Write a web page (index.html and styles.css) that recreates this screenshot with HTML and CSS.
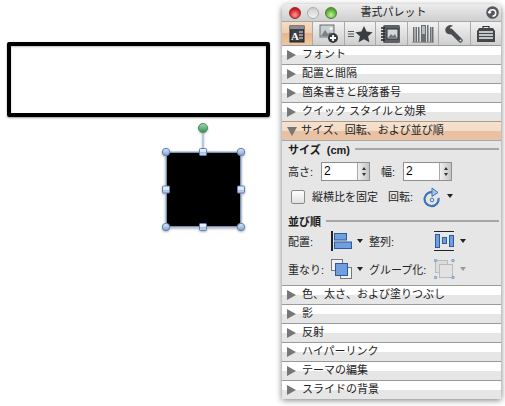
FILE: index.html
```html
<!DOCTYPE html>
<html lang="ja">
<head>
<meta charset="utf-8">
<title>書式パレット</title>
<link rel="stylesheet" href="styles.css">
</head>
<body>
<main class="canvas">
  <div class="box-shape"></div>
  <svg class="selection" width="100" height="120" viewBox="0 0 100 120">
    <defs>
      <linearGradient id="hb" x1="0" y1="0" x2="0" y2="1"><stop offset="0" stop-color="#dfe8f6"/><stop offset="1" stop-color="#7f9fd0"/></linearGradient>
      <linearGradient id="hs" x1="0" y1="0" x2="0" y2="1"><stop offset="0" stop-color="#eef3fb"/><stop offset=".5" stop-color="#dbe5f4"/><stop offset=".55" stop-color="#a9c0e4"/><stop offset="1" stop-color="#c5d5ee"/></linearGradient>
      <linearGradient id="hg" x1="0" y1="0" x2="0" y2="1"><stop offset="0" stop-color="#a5d8ae"/><stop offset="1" stop-color="#2f8f55"/></linearGradient>
    </defs>
    <line x1="47" y1="13" x2="47" y2="37" stroke="#a9c0e4" stroke-width="1.5"/>
    <rect x="10" y="37" width="75" height="75" fill="#000" stroke="#a9c0e4" stroke-width="1.5"/>
    <circle cx="47" cy="13" r="4.5" fill="url(#hg)" stroke="#4a8a68"/>
    <g fill="url(#hb)" stroke="#5f7fb5">
      <circle cx="10" cy="37" r="3.7"/><circle cx="85" cy="37" r="3.7"/>
      <circle cx="10" cy="112" r="3.7"/><circle cx="85" cy="112" r="3.7"/>
    </g>
    <g fill="url(#hs)" stroke="#5f7fb5">
      <rect x="43.5" y="33.5" width="7" height="7" rx="1"/><rect x="43.5" y="108.5" width="7" height="7" rx="1"/>
      <rect x="6.5" y="71" width="7" height="7" rx="1"/><rect x="81.5" y="71" width="7" height="7" rx="1"/>
    </g>
  </svg>
</main>

<aside class="palette">
  <header class="titlebar">
    <div class="lights"><span class="light red"></span><span class="light off"></span><span class="light green"></span></div>
    <h1 class="title">書式パレット</h1>
    <svg class="help" width="13" height="13" viewBox="0 0 12 12"><circle cx="6" cy="6" r="5.8" fill="#55585c"/><path d="M3 6.500a3 3 0 1 1 3 3M3 6.500l-.8-1.600M3 6.500l1.700-.8" fill="none" stroke="#fff" stroke-width="1.400"/></svg>
  </header>

  <nav class="toolbar">
    <div class="tool active">
      <svg width="20" height="20" viewBox="0 0 20 20"><rect x="3" y="2" width="14" height="16" fill="#3c4046" stroke="#1e1e1e"/><rect x="3" y="2" width="14" height="3" fill="#8a8e92"/><text x="4" y="15.500" class="tool-a">A</text><path d="M12 8h4M12 11h4M12 14h4" stroke="#e8e8e8" stroke-width="1.200"/></svg>
    </div>
    <div class="tool">
      <svg width="22" height="20" viewBox="0 0 22 20"><rect x="2" y="1" width="14" height="12" fill="#c9ced3" stroke="#6a6e73"/><path d="M3 12l4-6 3 4 2-2 3 4z" fill="#7c8187"/><circle cx="13" cy="4.500" r="1.500" fill="#f4f4f4"/><circle cx="15" cy="14" r="5" fill="#3a3d42"/><path d="M15 11v6M12 14h6" stroke="#fff" stroke-width="1.800"/></svg>
    </div>
    <div class="tool">
      <svg width="26" height="20" viewBox="0 0 26 20"><path d="M1 7.500h6M1 10h6M1 12.500h6" stroke="#555" stroke-width="1"/><path d="M17 2l2.600 5.600 6 .7-4.500 4 1.300 6L17 15.300 11.600 18.300l1.300-6-4.500-4 6-.7z" fill="#3a3d42"/></svg>
    </div>
    <div class="tool">
      <svg width="22" height="20" viewBox="0 0 22 20"><rect x="3" y="1" width="17" height="18" rx="1.500" fill="#5d6166"/><rect x="7" y="5" width="11" height="10" fill="#d5d8dc" stroke="#2e3034"/><path d="M8 14l3-4 2 2 2-2 2 4z" fill="#777"/><path d="M1 4h4M1 7h4M1 10h4M1 13h4M1 16h4" stroke="#222" stroke-width="1.300"/></svg>
    </div>
    <div class="tool">
      <svg width="22" height="20" viewBox="0 0 22 20">
        <g fill="#6a6e73"><rect x="1" y="3" width="1.500" height="15"/><rect x="3.500" y="3" width="1.500" height="15"/><rect x="6" y="3" width="1.500" height="15"/><rect x="9" y="1" width="5" height="17"/><rect x="15" y="1" width="1.500" height="17"/><rect x="18" y="3" width="1.500" height="15"/><rect x="20" y="3" width="1.500" height="15"/></g>
        <g fill="#b6bbc0"><rect x="10" y="2" width="3" height="8"/></g>
        <rect x="0" y="18" width="22" height="1" fill="#9a9a9a"/>
      </svg>
    </div>
    <div class="tool">
      <svg width="20" height="20" viewBox="0 0 20 20"><path d="M7 7l9.500 9.500" stroke="#4a4e53" stroke-width="4.500" stroke-linecap="round"/><path d="M9 1.800A5 5 0 0 0 2 8.500a5 5 0 0 0 6.800 1L9.500 6.500 6.500 5.500 6 3.500z" fill="#4a4e53"/><circle cx="16.500" cy="16.500" r="1" fill="#e6e6e6"/></svg>
    </div>
    <div class="tool">
      <svg width="20" height="20" viewBox="0 0 20 20"><path d="M7 4V2.500h6V4" fill="none" stroke="#333" stroke-width="1.200"/><path d="M1 7l2-3h14l2 3v11H1z" fill="#44484d"/><path d="M3 8h14M3 11h14M3 14h14" stroke="#eee" stroke-width="1.300"/></svg>
    </div>
  </nav>

  <div class="section"><span class="arrow"></span><span class="name">フォント</span></div>
  <div class="section"><span class="arrow"></span><span class="name">配置と間隔</span></div>
  <div class="section"><span class="arrow"></span><span class="name">箇条書きと段落番号</span></div>
  <div class="section"><span class="arrow"></span><span class="name">クイック スタイルと効果</span></div>
  <div class="section open"><span class="arrow down"></span><span class="name">サイズ、回転、および並び順</span></div>

  <div class="panel">
    <div class="group-head"><strong>サイズ (cm)</strong><span class="rule"></span></div>
    <div class="row size-row">
      <label class="lab lab-h">高さ:</label>
      <div class="spin"><span class="value">2</span><span class="stepper"><i class="up"></i><i class="dn"></i></span></div>
      <label class="lab lab-w">幅:</label>
      <div class="spin"><span class="value">2</span><span class="stepper"><i class="up"></i><i class="dn"></i></span></div>
    </div>
    <div class="row lock-row">
      <span class="check"></span>
      <span class="lab lab-lock">縦横比を固定</span>
      <span class="lab lab-rot">回転:</span>
      <svg class="rot" width="18" height="21" viewBox="0 0 18 21"><path d="M11 5.500A7 7 0 1 0 15.500 11" fill="none" stroke="#3f73b8" stroke-width="2.200"/><path d="M9 1l6 4.500-6 4z" fill="#a9c4e8" stroke="#3f73b8"/><circle cx="9" cy="13" r="1.800" fill="none" stroke="#3f73b8"/></svg>
      <span class="drop"></span>
    </div>

    <div class="group-head second"><strong>並び順</strong><span class="rule"></span></div>
    <div class="row arrange">
      <span class="lab lab-a">配置:</span>
      <svg class="ic" width="21" height="20" viewBox="0 0 21 20"><rect width="2" height="20" fill="#222"/><rect x="3.500" y="2.500" width="12" height="6.500" fill="#6f9fdc" stroke="#2c5a9e"/><rect x="3.500" y="11" width="17" height="6.500" fill="#6f9fdc" stroke="#2c5a9e"/></svg>
      <span class="drop"></span>
      <span class="lab lab-b">整列:</span>
      <svg class="ic" width="21" height="20" viewBox="0 0 21 20"><path d="M0 .5h20M0 19.500h20" stroke="#222"/><rect x="1.500" y="3.500" width="4" height="13" fill="#6f9fdc" stroke="#2c5a9e"/><rect x="8.500" y="6.500" width="4" height="6" fill="#6f9fdc" stroke="#2c5a9e"/><rect x="15.500" y="4.500" width="4" height="11" fill="#6f9fdc" stroke="#2c5a9e"/></svg>
      <span class="drop"></span>
    </div>
    <div class="row arrange arrange-2">
      <span class="lab lab-a">重なり:</span>
      <svg class="ic" width="21" height="20" viewBox="0 0 21 20"><rect x=".5" y=".5" width="11" height="11" fill="#f2f2f2" stroke="#777"/><rect x="9.500" y="8.500" width="11" height="11" fill="#f2f2f2" stroke="#777"/><rect x="4.500" y="4.500" width="12" height="12" fill="#6f9fdc" stroke="#2c5a9e"/></svg>
      <span class="drop"></span>
      <span class="lab lab-b">グループ化:</span>
      <svg class="ic" width="21" height="20" viewBox="0 0 21 20"><rect x="1.500" y="1.500" width="12" height="12" fill="#dcdcdc" stroke="#bbb"/><rect x="5.500" y="5.500" width="13" height="13" fill="#e2e2e2" stroke="#bbb"/><g fill="#a9c0e4" stroke="#7f9fd0"><circle cx="1.500" cy="1.500" r="1.300"/><circle cx="19" cy="1.500" r="1.300"/><circle cx="1.500" cy="18.500" r="1.300"/><circle cx="19" cy="18.500" r="1.300"/></g></svg>
      <span class="drop off"></span>
    </div>
  </div>

  <div class="section"><span class="arrow"></span><span class="name">色、太さ、および塗りつぶし</span></div>
  <div class="section"><span class="arrow"></span><span class="name">影</span></div>
  <div class="section"><span class="arrow"></span><span class="name">反射</span></div>
  <div class="section"><span class="arrow"></span><span class="name">ハイパーリンク</span></div>
  <div class="section"><span class="arrow"></span><span class="name">テーマの編集</span></div>
  <div class="section"><span class="arrow"></span><span class="name">スライドの背景</span></div>
</aside>
</body>
</html>
```
FILE: styles.css
```css
* { box-sizing: border-box; }
html, body { margin: 0; padding: 0; }
body {
  width: 505px;
  height: 406px;
  position: relative;
  overflow: hidden;
  background: #fff;
  font-family: "Liberation Sans", "Noto Sans CJK JP", sans-serif;
  font-size: 11px;
  color: #222;
}
.canvas { position: absolute; left: 0; top: 0; width: 280px; height: 406px; }
.box-shape {
  position: absolute;
  left: 7px;
  top: 42px;
  width: 263px;
  height: 75px;
  border: 4px solid #000;
  border-radius: 2px;
  box-shadow: 0 1px 2px rgba(0,0,0,.4), inset 0 1px 2px rgba(0,0,0,.25);
}
.selection { position: absolute; left: 156px; top: 115px; filter: drop-shadow(0 1px 1px rgba(0,0,0,.3)); }

.palette {
  position: absolute;
  left: 282px;
  top: 4px;
  width: 219px;
  height: 394px;
  background: #e6e6e6;
  border-radius: 5px 5px 0 0;
  box-shadow: 0 2px 6px rgba(0,0,0,.55);
}
.titlebar {
  height: 17px;
  display: flex;
  align-items: center;
  padding: 0 2px 0 7px;
  background: linear-gradient(#ececec, #cfcfcf);
  border-radius: 5px 5px 0 0;
}
.lights { display: flex; gap: 6px; }
.light { width: 12px; height: 12px; border-radius: 50%; border: 1px solid #888; }
.red { background: radial-gradient(circle at 50% 70%, #ff9a9a, #d0141c 70%); border-color: #8c2a2a; }
.off { background: linear-gradient(#cfcfcf, #f2f2f2); border-color: #aaa; }
.green { background: radial-gradient(circle at 50% 70%, #c4f09a, #4ca52c 70%); border-color: #4d7c35; }
.title { flex: 1; margin: 0; padding-right: 36px; font-size: 11px; font-weight: normal; text-align: center; color: #222; line-height: 17px; }
.help { display: block; }

.toolbar { height: 24px; display: flex; background: linear-gradient(#f2f2f2, #cfcfcf); border-top: 1px solid #a8a8a8; }
.tool { flex: 1; display: flex; align-items: center; justify-content: center; border-left: 1px solid #aaa; }
.tool:first-child { border-left: 0; }
.tool.active { background: linear-gradient(#f5dcc4 0, #f0cda9 50%, #e6b68c 50%, #efc6a0 100%); }
.tool-a { font: bold 11px "Liberation Serif", serif; fill: #fff; }

.section {
  height: 19px;
  display: flex;
  align-items: center;
  padding-left: 5px;
  border-top: 1px solid #9a9a9a;
  background: linear-gradient(#fff 0, #fff 50%, #e6e6e6 50%, #e6e6e6 100%);
  color: #222;
}
.name { display: block; line-height: 16px; margin-top: -2px; }
.arrow {
  width: 0; height: 0;
  margin-right: 6px;
  border-left: 9px solid #777;
  border-top: 5.5px solid transparent;
  border-bottom: 5.5px solid transparent;
}
.arrow.down {
  border-top: 9px solid #777;
  border-bottom: 0;
  border-left: 5.5px solid transparent;
  border-right: 5.5px solid transparent;
  margin-right: 4px;
}
.section.open {
  height: 20px;
  background: linear-gradient(#f5e1cf 0, #f3dcc7 50%, #e8c0a2 50%, #e8c3a6 100%);
  border-top-color: #b09a88;
  border-bottom: 1px solid #a8a8a8;
}

.panel { height: 144px; padding: 0 2px 0 6px; background: #e6e6e6; }
.group-head { display: flex; align-items: center; gap: 5px; height: 16px; }
.group-head strong { font-weight: bold; color: #1a1a1a; word-spacing: 3px; }
.group-head.second { margin-top: 5px; }
.rule { flex: 1; height: 2px; background: #a6a6a6; }

.row { display: flex; align-items: center; }
.size-row { height: 20px; margin-top: 4px; }
.lab-h { width: 33px; }
.lab-w { width: 22px; margin-left: 11px; }
.spin { width: 49px; height: 19px; display: flex; border: 1px solid #8f8f8f; background: #fff; }
.value { flex: 1; padding-left: 2px; font-size: 12px; line-height: 17px; color: #000; }
.stepper {
  width: 12px;
  display: flex;
  flex-direction: column;
  align-items: center;
  justify-content: center;
  gap: 3px;
  background: linear-gradient(90deg, #f0f0f0, #c4c4c4);
  border-left: 1px solid #aaa;
}
.stepper i { width: 0; height: 0; border-left: 2.5px solid transparent; border-right: 2.5px solid transparent; }
.stepper .up { border-bottom: 3px solid #333; }
.stepper .dn { border-top: 3px solid #333; }

.lock-row { height: 22px; margin-top: 5px; }
.lock-row .lab { margin-top: -2px; }
.check {
  width: 14px; height: 14px;
  margin-left: 3px;
  border: 1px solid #8a8a8a;
  border-radius: 2px;
  background: linear-gradient(#fff, #e2e2e2);
}
.lab-lock { margin-left: 7px; width: 76px; }
.lab-rot { width: 35px; }
.rot { display: block; }
.drop {
  width: 0; height: 0;
  margin-left: 5px;
  border-left: 3.5px solid transparent;
  border-right: 3.5px solid transparent;
  border-top: 4px solid #222;
}
.lock-row .drop { margin-left: 6px; margin-top: -2px; }
.drop.off { border-top-color: #999; }

.arrange { height: 20px; margin-top: 2px; }
.arrange-2 { margin-top: 8px; }
.ic { display: block; }
.lab-a { width: 43px; margin-top: -1px; }
.lab-b { width: 65px; margin-left: 6px; margin-top: -1px; }
```
